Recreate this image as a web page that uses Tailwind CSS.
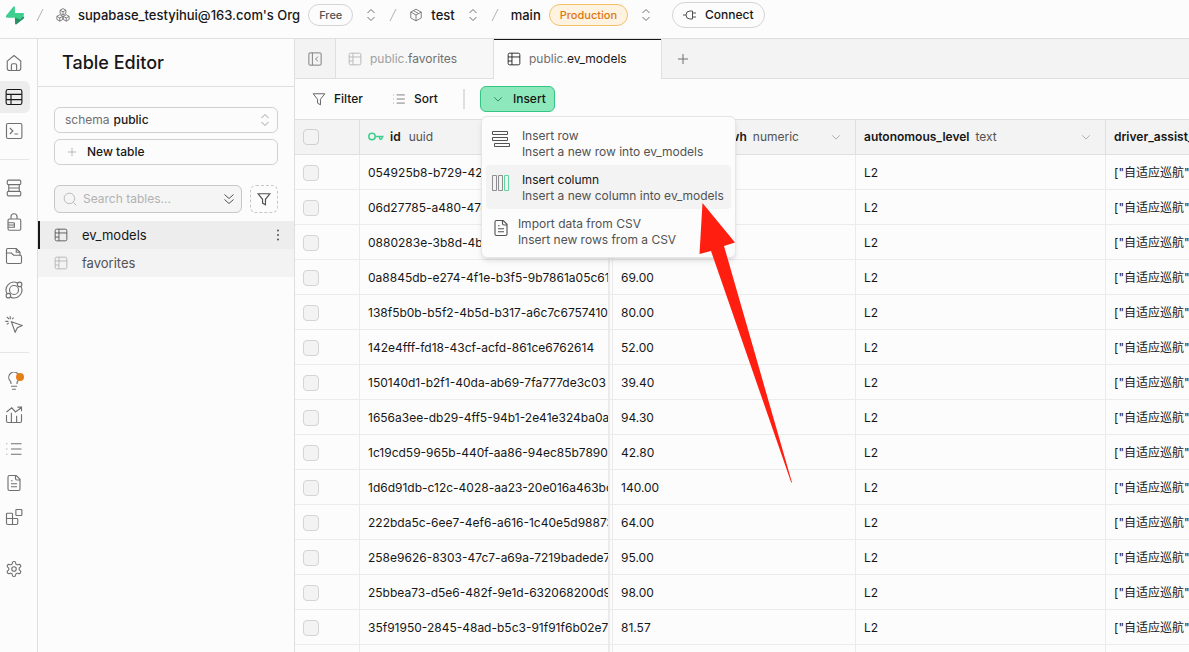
<!DOCTYPE html>
<html lang="en">
<head>
    <meta charset="UTF-8">
    <meta name="viewport" content="width=device-width, initial-scale=1.0">
    <title>ev_models | Table Editor</title>
    <script src="https://cdn.jsdelivr.net/npm/@tailwindcss/browser@4"></script>
</head>
<body class="h-screen flex flex-col overflow-hidden bg-[#fcfcfc] text-[#171717] text-[12px] leading-4 font-medium font-['Inter','Noto_Sans_CJK_SC',sans-serif]">

    <!-- Icons -->
    <svg class="hidden">
        <symbol id="i-updown" viewBox="0 0 24 24"><path d="m5 16 7 7 7-7M5 8l7-7 7 7"/></symbol>
        <symbol id="i-down" viewBox="0 0 24 24"><path d="m3 8 9 9 9-9"/></symbol>
        <symbol id="i-table" viewBox="0 0 24 24"><rect x="2" y="2" width="20" height="20" rx="2.5"/><path d="M2 8.5h20M8.5 2v20M2 15.5h6.5"/></symbol>
        <symbol id="i-list" viewBox="0 0 24 24"><path d="M8 5h14M8 12h14M8 19h14M2 5h1M2 12h1M2 19h1"/></symbol>
        <symbol id="i-filter" viewBox="0 0 24 24"><path d="M2 3h20l-7.500 9.500V22l-5-3v-6.500z"/></symbol>
        <symbol id="i-file" viewBox="0 0 24 24"><path d="M15 2H6a2 2 0 0 0-2 2v16a2 2 0 0 0 2 2h12a2 2 0 0 0 2-2V7zM14 2v4a2 2 0 0 0 2 2h4M8 9h2M8 13h8M8 17h8"/></symbol>
        <symbol id="i-plus" viewBox="0 0 24 24"><path d="M2 12h20M12 2v20"/></symbol>
    </svg>

    <!-- Top bar -->
    <header class="h-[39px] shrink-0 flex items-center border-b border-[#dfdfdf] pb-2 pl-1.5 text-[13px]">
        <a href="#" aria-label="Home" class="shrink-0">
            <svg class="w-[18px] h-[19px]" viewBox="0 0 18 19"><path d="M10.500 18.200c-.5.600-1.400.3-1.400-.5l-.2-7.500h7.900c1.200 0 1.800 1.300 1 2.200z" fill="#249361"/><path d="M7.500.600C8 0 8.900.300 8.900 1.100l.1 10.700H1.200c-1.200 0-1.800-1.400-1-2.300z" fill="#3ecf8e"/><path d="M9 7h7.800c1.200 0 1.800 1.300 1 2.200l-3.500 4.300L9 11.800z" fill="#3ecf8e"/></svg>
        </a>
        <svg class="ml-2 size-4 stroke-[#b2b2b2] fill-none" viewBox="0 0 16 16"><path d="m11 2-6 12"/></svg>
        <a href="#" class="flex items-center ml-2">
            <svg class="size-3.5 stroke-[#707070] fill-none stroke-[1.5]" viewBox="0 0 24 24"><path d="m12 1 5 2.800v5.400L12 12 7 9.200V3.800zM7 3.800 12 6.500l5-2.700M12 6.500V12M6.500 11.500l5 2.800v5.400l-5 2.800-5-2.800v-5.400zM1.500 14.300l5 2.700 5-2.700M6.500 17v5.500M17.500 11.500l5 2.800v5.400l-5 2.800-5-2.800v-5.400zM12.500 14.300l5 2.700 5-2.700M17.500 17v5.500"/></svg>
            <span class="ml-2 whitespace-nowrap">supabase_testyihui@163.com's Org</span>
            <span class="ml-2 px-2.5 h-[22px] flex items-center rounded-full border border-[#d4d4d4] text-[11px] text-[#525252]">Free</span>
        </a>
        <button aria-label="Switch organization" class="ml-3"><svg class="size-3 stroke-[#707070] fill-none stroke-2" viewBox="0 0 24 24"><use href="#i-updown"/></svg></button>
        <svg class="ml-2 size-4 stroke-[#b2b2b2] fill-none" viewBox="0 0 16 16"><path d="m11 2-6 12"/></svg>
        <a href="#" class="flex items-center ml-2">
            <svg class="size-3.5 stroke-[#707070] fill-none stroke-[1.5]" viewBox="0 0 24 24"><path d="m12 2 9 5v10l-9 5-9-5V7zM3 7l9 5 9-5M12 12v10M7.500 4.500l9 5"/></svg>
            <span class="ml-2">test</span>
        </a>
        <button aria-label="Switch project" class="ml-3"><svg class="size-3 stroke-[#707070] fill-none stroke-2" viewBox="0 0 24 24"><use href="#i-updown"/></svg></button>
        <svg class="ml-2 size-4 stroke-[#b2b2b2] fill-none" viewBox="0 0 16 16"><path d="m11 2-6 12"/></svg>
        <a href="#" class="flex items-center ml-2">
            <span>main</span>
            <span class="ml-2 px-2.5 h-[22px] flex items-center rounded-full border border-[#f5c069] bg-[#fef3e0] text-[11px] text-[#db7712]">Production</span>
        </a>
        <button aria-label="Switch branch" class="ml-3"><svg class="size-3 stroke-[#707070] fill-none stroke-2" viewBox="0 0 24 24"><use href="#i-updown"/></svg></button>
        <button class="ml-5 px-2.5 h-[26px] flex items-center gap-2 rounded-full border border-[#d4d4d4] text-[12px]">
            <svg class="w-3.5 h-3 stroke-[#525252] fill-none" viewBox="0 0 14 12"><path d="M0 6h3M9.500 2H7a4 4 0 0 0 0 8h2.500zM9.500 4H13M9.500 8H13"/></svg>
            Connect
        </button>
    </header>

    <div class="flex flex-1 min-h-0">
        <!-- Icon rail -->
        <nav class="w-[38px] shrink-0 border-r border-[#dfdfdf] pt-2 flex flex-col gap-0.5 [&_a]:w-[30px] [&_a]:h-8 [&_a]:shrink-0 [&_a]:flex [&_a]:items-center [&_a]:justify-center [&_a]:pr-0.5 [&_svg]:size-[18px] [&_svg]:fill-none [&_svg]:stroke-[#707070] [&_svg]:stroke-[1.5]">
            <a href="#" aria-label="Project overview"><svg viewBox="0 0 24 24"><path d="M3 9.500 12 2l9 7.500V19a3 3 0 0 1-3 3H6a3 3 0 0 1-3-3zM8.500 22v-7a2 2 0 0 1 2-2h3a2 2 0 0 1 2 2v7"/></svg></a>
            <a href="#" aria-label="Table Editor" class="bg-[#ededed] rounded-r-md"><svg class="stroke-[#171717]!" viewBox="0 0 24 24"><rect x="1.500" y="2" width="21" height="20" rx="2.500"/><path d="M1.500 8.500h21M1.500 15.500h21M8 8.500V22"/></svg></a>
            <a href="#" aria-label="SQL Editor"><svg viewBox="0 0 24 24"><rect x="2" y="2" width="20.500" height="20" rx="2"/><path d="m6.500 8 4 4-4 4M12.500 16h5"/></svg></a>
            <hr class="my-2.5 w-[29px] border-[#e6e6e6]">
            <a href="#" aria-label="Database"><svg viewBox="0 0 24 24"><rect x="3" y="1.500" width="18" height="6" rx="1.500"/><rect x="3" y="16.500" width="18" height="6" rx="1.500"/><path d="M5 7.500v9M19 7.500v9M5 12h14"/></svg></a>
            <a href="#" aria-label="Authentication"><svg viewBox="0 0 24 24"><rect x="4" y="8" width="17" height="15" rx="2"/><path d="M8 8V5a4 4 0 0 1 8 0v3M4 13h8.500M4 16h8.500M4 19h8.500v-6"/></svg></a>
            <a href="#" aria-label="Storage"><svg viewBox="0 0 24 24"><path d="M2 9.500V3.500a1.500 1.500 0 0 1 1.500-1.500H15l5 5v4M15 2v5h5"/><path d="M2 19V8h6.500l3 3H20a2 2 0 0 1 2 2v7a2 2 0 0 1-2 2H4a2 2 0 0 1-2-2z"/></svg></a>
            <a href="#" aria-label="Edge Functions"><svg viewBox="0 0 24 24"><circle cx="12" cy="12" r="6"/><path d="M16.500 2.500A10.500 10.500 0 0 0 2.500 16.500M7.500 21.500A10.500 10.500 0 0 0 21.500 7.500"/><circle cx="19.500" cy="4.500" r="3"/><circle cx="4.500" cy="19.500" r="3"/></svg></a>
            <a href="#" aria-label="Realtime"><svg viewBox="0 0 24 24"><path d="m8.500 9 14.500 5-6.500 3-3 6zM7 1.500v4M.5 8.500h4M2.500 2.500l3 3M11.500 3.500l-2 2M5 10.500l-2.500 2"/></svg></a>
            <hr class="my-2.5 w-[29px] border-[#e6e6e6]">
            <a href="#" aria-label="Advisors" class="relative"><svg viewBox="0 0 24 24"><path d="M8 16v-1.500c0-1-.5-2-1.500-3a7 7 0 1 1 11 0c-1 1-1.500 2-1.500 3V16M8 19h8M9.500 23h5"/></svg><span class="absolute right-1.5 top-2 size-2 rounded-full bg-[#e57f1b]"></span></a>
            <a href="#" aria-label="Reports"><svg viewBox="0 0 24 24"><path d="M2 8 9 2.500l5 5.500 8-6M16.500 1.500H22V7M2 12v8a2 2 0 0 0 2 2h16a2 2 0 0 0 2-2v-9M8.500 9v13M15.500 13v9"/></svg></a>
            <a href="#" aria-label="Logs"><svg viewBox="0 0 24 24"><use href="#i-list"/></svg></a>
            <a href="#" aria-label="API Docs"><svg viewBox="0 0 24 24"><use href="#i-file"/></svg></a>
            <a href="#" aria-label="Integrations"><svg viewBox="0 0 24 24"><path d="M10 22V8a1 1 0 0 0-1-1H3a1 1 0 0 0-1 1v12a2 2 0 0 0 2 2h11a2 2 0 0 0 2-2v-5a1 1 0 0 0-1-1H2"/><rect x="14.500" y="2" width="8" height="8" rx="1"/></svg></a>
            <a href="#" aria-label="Project Settings" class="mt-[18px]"><svg viewBox="0 0 24 24"><path d="M12.220 2h-.44a2 2 0 0 0-2 2v.18a2 2 0 0 1-1 1.730l-.43.25a2 2 0 0 1-2 0l-.15-.08a2 2 0 0 0-2.730.73l-.22.38a2 2 0 0 0 .73 2.730l.15.1a2 2 0 0 1 1 1.720v.51a2 2 0 0 1-1 1.740l-.15.09a2 2 0 0 0-.73 2.730l.22.38a2 2 0 0 0 2.730.73l.15-.08a2 2 0 0 1 2 0l.43.25a2 2 0 0 1 1 1.730V20a2 2 0 0 0 2 2h.44a2 2 0 0 0 2-2v-.18a2 2 0 0 1 1-1.730l.43-.25a2 2 0 0 1 2 0l.15.08a2 2 0 0 0 2.730-.73l.22-.39a2 2 0 0 0-.73-2.730l-.15-.08a2 2 0 0 1-1-1.740v-.5a2 2 0 0 1 1-1.740l.15-.09a2 2 0 0 0 .73-2.730l-.22-.38a2 2 0 0 0-2.730-.73l-.15.08a2 2 0 0 1-2 0l-.43-.25a2 2 0 0 1-1-1.730V4a2 2 0 0 0-2-2z"/><circle cx="12" cy="12" r="3"/></svg></a>
        </nav>

        <!-- Table list -->
        <aside class="w-[257px] shrink-0 border-r border-[#dfdfdf]">
            <div class="h-12 flex items-center px-6 border-b border-[#dfdfdf]">
                <h1 class="text-[18px] font-medium">Table Editor</h1>
            </div>
            <div class="px-4 pt-5 pb-2">
                <div class="relative flex items-center h-[26px] rounded-md border border-[#d0d0d0]">
                    <label for="schema" class="pl-2.5 font-normal text-[#707070]">schema</label>
                    <select id="schema" class="flex-1 h-full pl-1 appearance-none bg-transparent outline-none">
                        <option>public</option>
                    </select>
                    <svg class="absolute right-1.5 size-3 stroke-[#a0a0a0] fill-none stroke-2 pointer-events-none" viewBox="0 0 24 24"><use href="#i-updown"/></svg>
                </div>
                <button class="mt-1.5 w-full h-[26px] flex items-center gap-2.5 px-3 rounded-md border border-[#d0d0d0]">
                    <svg class="size-2.5 stroke-[#b2b2b2] fill-none stroke-2" viewBox="0 0 24 24"><use href="#i-plus"/></svg>
                    New table
                </button>
                <div class="mt-5 flex gap-2">
                    <div class="flex flex-1 min-w-0 items-center h-7 px-2 rounded-md border border-[#c7c7c7] bg-[#f5f5f5]">
                        <svg class="size-3.5 shrink-0 stroke-[#b2b2b2] fill-none stroke-[1.5]" viewBox="0 0 24 24"><circle cx="11" cy="11" r="9"/><path d="m18 18 5 5"/></svg>
                        <input type="text" placeholder="Search tables..." aria-label="Search tables" class="flex-1 min-w-0 pl-1.5 bg-transparent font-normal outline-none placeholder:text-[#b2b2b2]">
                        <button aria-label="Sort tables"><svg class="size-3 -mr-0.5 stroke-[#525252] fill-none stroke-2" viewBox="0 0 24 24"><path d="m3 3 9 8 9-8M3 13l9 8 9-8"/></svg></button>
                    </div>
                    <button aria-label="Filter tables" class="size-7 flex items-center justify-center rounded-md border border-dashed border-[#c7c7c7]"><svg class="size-3.5 stroke-[#525252] fill-none stroke-2" viewBox="0 0 24 24"><use href="#i-filter"/></svg></button>
                </div>
            </div>
            <ul class="text-[13px] font-normal">
                <li class="flex items-center h-7 pr-2.5 border-l-2 border-[#171717] bg-[#ededed]">
                    <a href="#" class="flex flex-1 items-center gap-3.5 pl-3.5"><svg class="size-3.5 stroke-[#525252] fill-none stroke-[1.5]" viewBox="0 0 24 24"><use href="#i-table"/></svg>ev_models</a>
                    <button aria-label="Table options"><svg class="size-3 fill-[#525252]" viewBox="0 0 12 12"><circle cx="6" cy="1.500" r="1"/><circle cx="6" cy="6" r="1"/><circle cx="6" cy="10.500" r="1"/></svg></button>
                </li>
                <li class="flex items-center h-7 border-l-2 border-[#f3f3f3] bg-[#f3f3f3]">
                    <a href="#" class="flex flex-1 items-center gap-3.5 pl-3.5 text-[#525252]"><svg class="size-3.5 stroke-[#b2b2b2] fill-none stroke-[1.5]" viewBox="0 0 24 24"><use href="#i-table"/></svg>favorites</a>
                </li>
            </ul>
        </aside>

        <!-- Grid -->
        <main class="flex-1 min-w-0 flex flex-col relative">
            <div class="flex h-10 shrink-0 bg-[#f3f3f3]">
                <button aria-label="Collapse sidebar" class="w-[41px] flex items-center justify-center border-r border-b border-[#dfdfdf]"><svg class="size-3.5 stroke-[#707070] fill-none stroke-[1.5]" viewBox="0 0 24 24"><rect x="1.500" y="1.500" width="21" height="21" rx="1.500"/><path d="M7.500 1.500v21M17 8l-4 4 4 4"/></svg></button>
                <button class="w-[157px] flex items-center gap-2 pl-3 border-b border-[#dfdfdf] bg-[#f7f7f7] font-normal text-[#707070]">
                    <svg class="size-3.5 stroke-[#b2b2b2] fill-none stroke-[1.5]" viewBox="0 0 24 24"><use href="#i-table"/></svg>
                    <span><span class="text-[#a0a0a0]">public.</span>favorites</span>
                </button>
                <button class="w-[169px] flex items-center gap-2 pl-[13px] border-x border-[#dfdfdf] bg-[#fcfcfc] shadow-[inset_0_1px_0_#171717]">
                    <svg class="size-3.5 stroke-[#171717] fill-none stroke-[1.5]" viewBox="0 0 24 24"><use href="#i-table"/></svg>
                    <span class="font-normal"><span class="text-[#707070]">public.</span>ev_models</span>
                </button>
                <button aria-label="New tab" class="flex-1 flex items-center pl-[15px] border-b border-[#dfdfdf]"><svg class="size-3 stroke-[#707070] fill-none stroke-2" viewBox="0 0 24 24"><use href="#i-plus"/></svg></button>
            </div>

            <div class="flex items-center h-[41px] shrink-0 pl-[17px] border-b border-[#dfdfdf]">
                <button class="flex items-center gap-2"><svg class="size-3.5 stroke-[#525252] fill-none stroke-[1.5]" viewBox="0 0 24 24"><use href="#i-filter"/></svg>Filter</button>
                <button class="flex items-center gap-2 ml-[29px]"><svg class="size-3.5 stroke-[#707070] fill-none stroke-[1.5]" viewBox="0 0 24 24"><use href="#i-list"/></svg>Sort</button>
                <div class="ml-[25px] w-0.5 h-5 bg-[#dfdfdf]"></div>
                <div class="relative ml-[15px]">
                    <button aria-haspopup="menu" aria-expanded="true" class="flex items-center gap-2.5 h-[26px] w-[75px] pl-3 rounded-md border border-[#34c484] bg-[#8de9bb]"><svg class="size-2.5 stroke-[#16794c] fill-none stroke-2" viewBox="0 0 24 24"><use href="#i-down"/></svg>Insert</button>
                    <!-- Insert menu -->
                    <div role="menu" class="absolute z-10 left-px top-[30px] w-[255px] p-1 rounded-md border border-[#e6e6e6] bg-[#fcfcfc] shadow-md font-normal text-[#525252] text-left">
                        <button role="menuitem" class="w-full h-11 flex items-center gap-3 pl-1.5 pt-0.5 text-left whitespace-nowrap">
                            <svg class="w-[18px] h-4 shrink-0 self-start mt-2 stroke-[#525252] fill-none" viewBox="0 0 18 16"><path d="M.5.500h15v3H.5zM.5 6.500h15v3H.5zM2.500 12.500h15v3h-15z"/></svg>
                            <span>Insert row<br>Insert a new row into ev_models</span>
                        </button>
                        <button role="menuitem" class="w-full h-11 flex items-center gap-3 pl-1.5 pt-0.5 text-left whitespace-nowrap rounded-sm bg-[#f3f3f3]">
                            <svg class="w-[18px] h-4 shrink-0 self-start mt-2 stroke-[#8f8f8f] fill-none" viewBox="0 0 18 16"><path d="M.5.500h4v15h-4zM6.500.500h4v15h-4z"/><path class="stroke-[#5fd6a0]" d="M12.500.500h4v15h-4z"/></svg>
                            <span><span class="text-[#171717]">Insert column</span><br>Insert a new column into ev_models</span>
                        </button>
                        <button role="menuitem" class="w-full h-11 flex items-center gap-2 pl-1.5 pt-0.5 text-left whitespace-nowrap">
                            <svg class="size-[18px] shrink-0 self-start mt-2 stroke-[#525252] fill-none stroke-[1.5]" viewBox="0 0 24 24"><use href="#i-file"/></svg>
                            <span>Import data from CSV<br>Insert new rows from a CSV</span>
                        </button>
                    </div>
                </div>
            </div>

            <div class="flex-1 min-h-0 overflow-hidden">
                <table class="table-fixed w-[1061px] border-separate border-spacing-0 text-left whitespace-nowrap [&_th]:h-[35px] [&_th]:p-0 [&_th]:pl-2 [&_th]:border-r [&_th]:border-b [&_th]:border-[#dfdfdf] [&_td]:h-[35px] [&_td]:p-0 [&_td]:pl-2 [&_td]:pt-px [&_td]:border-r [&_td]:border-b [&_td]:border-[#ebebeb]">
                    <colgroup><col class="w-[65px]"><col class="w-[253px]"><col class="w-[243px]"><col class="w-[250px]"><col class="w-[250px]"></colgroup>
                    <thead class="bg-[#f3f3f3]">
                        <tr>
                            <th><input type="checkbox" aria-label="Select all rows" class="block size-4 appearance-none rounded border border-[#d0d0d0] bg-[#f3f3f3]"></th>
                            <th><div class="flex items-center">
                                <svg class="w-4 h-2.5 mr-1.5 stroke-[#3ecf8e] fill-none stroke-[1.5]" viewBox="0 0 16 10"><circle cx="4" cy="4.500" r="3.200"/><path d="M7.200 4.500h8.300M14 4.500V6a1.200 1.200 0 0 1-2.500 0V4.500"/></svg>
                                <span class="font-semibold">id</span><span class="ml-2 font-normal text-[#525252]">uuid</span>
                            </div></th>
                            <th><div class="flex items-center pr-3.5">
                                <span class="font-semibold">battery_capacity_kwh</span><span class="ml-1.5 font-normal text-[#525252]">numeric</span>
                                <svg class="ml-auto size-2.5 stroke-[#a0a0a0] fill-none stroke-2" viewBox="0 0 24 24"><use href="#i-down"/></svg>
                            </div></th>
                            <th><div class="flex items-center pr-3.5">
                                <span class="font-semibold">autonomous_level</span><span class="ml-1.5 font-normal text-[#525252]">text</span>
                                <svg class="ml-auto size-2.5 stroke-[#a0a0a0] fill-none stroke-2" viewBox="0 0 24 24"><use href="#i-down"/></svg>
                            </div></th>
                            <th><span class="font-semibold">driver_assist_features</span></th>
                        </tr>
                    </thead>
                    <tbody id="rows" class="font-normal"></tbody>
                </table>
            </div>
        </main>
    </div>

    <!-- Annotation arrow -->
    <svg class="absolute z-20 left-[699px] top-[203px] w-[94px] h-[280px] pointer-events-none" viewBox="0 0 94 280"><path d="M3.500 0 36 39.500l-11 3.500L93 279.500h-.8L12 48 .5 51z" fill="#ff1e10"/></svg>

    <script>
        const rows = [
            ['054925b8-b729-4261-9c0e-5d1f7a3b8e20', '60.00'],
            ['06d27785-a480-47d3-8f52-1b6c90e4a7d1', '75.00'],
            ['0880283e-3b8d-4b17-a2c6-e04d95f1b382', '82.00'],
            ['0a8845db-e274-4f1e-b3f5-9b7861a05c61', '69.00'],
            ['138f5b0b-b5f2-4b5d-b317-a6c7c6757410', '80.00'],
            ['142e4fff-fd18-43cf-acfd-861ce6762614', '52.00'],
            ['150140d1-b2f1-40da-ab69-7fa777de3c03', '39.40'],
            ['1656a3ee-db29-4ff5-94b1-2e41e324ba0a', '94.30'],
            ['1c19cd59-965b-440f-aa86-94ec85b78902', '42.80'],
            ['1d6d91db-c12c-4028-aa23-20e016a463bc', '140.00'],
            ['222bda5c-6ee7-4ef6-a616-1c40e5d98873', '64.00'],
            ['258e9626-8303-47c7-a69a-7219badede75', '95.00'],
            ['25bbea73-d5e6-482f-9e1d-632068200d9', '98.00'],
            ['35f91950-2845-48ad-b5c3-91f91f6b02e7', '81.57'],
            ['', '']
        ];

        document.getElementById('rows').innerHTML = rows.map(([id, kwh]) => `
            <tr>
                <td><input type="checkbox" aria-label="Select row" class="block size-4 appearance-none rounded border border-[#d4d4d4] bg-[#f3f3f3]"></td>
                <td><div class="flex items-center w-[242px] -mt-px pt-px h-[34px] border-r-2 border-[#ebebeb] overflow-hidden">${id}</div></td>
                <td>${kwh}</td>
                <td>L2</td>
                <td>["自适应巡航", "车道保持"]</td>
            </tr>`).join('');
    </script>
</body>
</html>
